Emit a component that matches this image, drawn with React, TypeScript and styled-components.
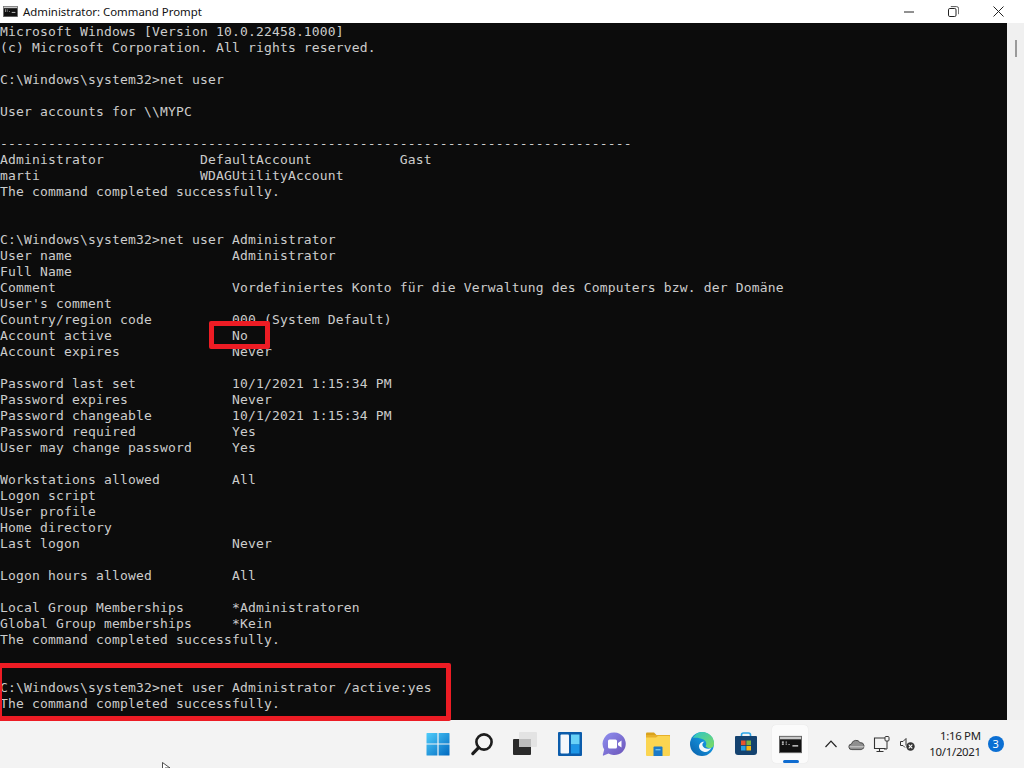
import React from "react";
import styled, { createGlobalStyle } from "styled-components";

const Global = createGlobalStyle`
  html, body { margin: 0; padding: 0; width: 1024px; height: 768px; overflow: hidden; background: #f3f3f3; }
`;

const Page = styled.div`
  position: relative;
  width: 1024px;
  height: 768px;
  display: flex;
  flex-direction: column;
  overflow: hidden;
  font-family: "Noto Sans", "Open Sans", sans-serif;
`;

const TitleBar = styled.header`
  height: 23px;
  flex: none;
  background: #fff;
  display: flex;
  align-items: center;
  padding: 0 3px;
`;

const TitleText = styled.span`
  margin-left: 5px;
  flex: 1;
  font-size: 11.4px;
  color: #111;
  white-space: nowrap;
`;

const WinButton = styled.div`
  width: 45px;
  height: 23px;
  display: flex;
  align-items: center;
  justify-content: center;
`;

const Middle = styled.div`
  flex: 1;
  display: flex;
  min-height: 0;
`;

const Console = styled.pre`
  flex: 1;
  margin: 0;
  padding-top: 1px;
  background: #0c0c0c;
  color: #cccccc;
  font-family: "DejaVu Sans Mono", monospace;
  font-size: 13px;
  letter-spacing: 0.17px;
  line-height: 16px;
  overflow: hidden;
`;

const ScrollTrack = styled.div`
  width: 17px;
  flex: none;
  background: #f0f0f0;
  padding-top: 17px;
  display: flex;
  justify-content: center;
`;

const ScrollThumb = styled.div`
  width: 2px;
  height: 17px;
  background: #9a9a9a;
`;

const Taskbar = styled.footer`
  height: 48px;
  flex: none;
  background: #f3f3f3;
  display: flex;
  align-items: center;
  padding-left: 416px;
`;

const Apps = styled.div`
  display: flex;
  align-items: center;
  height: 48px;
`;

const AppSlot = styled.div<{ $active?: boolean }>`
  position: relative;
  width: 44px;
  height: 48px;
  display: flex;
  align-items: center;
  justify-content: center;
  &::before {
    content: "";
    display: ${(p) => (p.$active ? "block" : "none")};
    position: absolute;
    left: 4px;
    top: 5px;
    width: 36px;
    height: 38px;
    background: #fbfbfb;
    border-radius: 4px;
    box-shadow: 0 0 1px rgba(0, 0, 0, 0.12);
  }
  &::after {
    content: "";
    display: ${(p) => (p.$active ? "block" : "none")};
    position: absolute;
    left: 15px;
    top: 40px;
    width: 16px;
    height: 3px;
    border-radius: 2px;
    background: #0f6cd0;
  }
  & > svg {
    position: relative;
    z-index: 1;
  }
`;

const Tray = styled.div`
  display: flex;
  align-items: center;
  height: 48px;
  margin-left: 6px;
`;

const TrayIcon = styled.div`
  width: 25.7px;
  display: flex;
  justify-content: center;
`;

const Clock = styled.div`
  width: 60px;
  text-align: right;
  font-size: 11.4px;
  letter-spacing: -0.3px;
  line-height: 16px;
  color: #222;
`;

const Badge = styled.div`
  width: 16px;
  height: 16px;
  margin-left: 7px;
  border-radius: 50%;
  background: #0b6fd3;
  color: #fff;
  font-size: 11px;
  line-height: 16px;
  text-align: center;
`;

const RedFrame = styled.div<{ $l: number; $t: number; $w: number; $h: number }>`
  position: absolute;
  left: ${(p) => p.$l}px;
  top: ${(p) => p.$t}px;
  width: ${(p) => p.$w}px;
  height: ${(p) => p.$h}px;
  box-sizing: border-box;
  border: 5px solid #ed1c24;
  border-radius: 2px;
`;

const Cursor = styled.svg`
  position: absolute;
  left: 162px;
  top: 762px;
`;

const log = String.raw`Microsoft Windows [Version 10.0.22458.1000]
(c) Microsoft Corporation. All rights reserved.

C:\Windows\system32>net user

User accounts for \\MYPC

-------------------------------------------------------------------------------
Administrator            DefaultAccount           Gast
marti                    WDAGUtilityAccount
The command completed successfully.


C:\Windows\system32>net user Administrator
User name                    Administrator
Full Name
Comment                      Vordefiniertes Konto für die Verwaltung des Computers bzw. der Domäne
User's comment
Country/region code          000 (System Default)
Account active               No
Account expires              Never

Password last set            10/1/2021 1:15:34 PM
Password expires             Never
Password changeable          10/1/2021 1:15:34 PM
Password required            Yes
User may change password     Yes

Workstations allowed         All
Logon script
User profile
Home directory
Last logon                   Never

Logon hours allowed          All

Local Group Memberships      *Administratoren
Global Group memberships     *Kein
The command completed successfully.


C:\Windows\system32>net user Administrator /active:yes
The command completed successfully.`;

const CmdGlyph = ({ w, h }: { w: number; h: number }) => (
  <svg width={w} height={h} viewBox="0 0 24 18">
    <rect x="0.5" y="0.5" width="23" height="17" fill="#111" stroke="#666" />
    <rect x="1" y="1" width="22" height="2.6" fill="#c8c8c8" />
    <path d="M3 6.5h2M3 8.5h2M7 6.5h1M7 8.5h1M10 9h1M14 10.5h6" stroke="#e8e8e8" strokeWidth="1.3" />
  </svg>
);

const StartIcon = () => (
  <svg width="24" height="24" viewBox="0 0 24 24">
    <defs>
      <linearGradient id="st" x1="0" y1="0" x2="1" y2="1">
        <stop offset="0" stopColor="#4fcdfb" />
        <stop offset="1" stopColor="#0069c0" />
      </linearGradient>
    </defs>
    <path d="M1 1h10.4v10.4H0.5V1.5Q.5 1 1 1ZM12.6 1H23q.5 0 .5.5v9.9H12.6ZM.5 12.6h10.9v10.9H1q-.5 0-.5-.5ZM12.6 12.6h10.9V23q0 .5-.5.5H12.6Z" fill="url(#st)" />
  </svg>
);

const SearchIcon = () => (
  <svg width="24" height="24" viewBox="0 0 24 24">
    <circle cx="14" cy="10" r="7.6" fill="none" stroke="#1c1c1c" strokeWidth="2.6" />
    <path d="M8.6 15.6 2.8 21.6" stroke="#1c1c1c" strokeWidth="3.2" strokeLinecap="round" />
  </svg>
);

const TaskViewIcon = () => (
  <svg width="26" height="24" viewBox="0 0 26 24">
    <rect x="6" y="0" width="18" height="15" rx="1" fill="#e3e3e3" />
    <rect x="0" y="7" width="18" height="16" rx="1" fill="#2a2a2a" />
    <rect x="6" y="7" width="12" height="8" fill="#bdbdbd" />
  </svg>
);

const WidgetsIcon = () => (
  <svg width="24" height="24" viewBox="0 0 24 24">
    <rect width="24" height="24" rx="1" fill="#0b5cab" />
    <rect x="2.5" y="2.5" width="8.5" height="19" rx="1" fill="#f4f7fb" />
    <rect x="13" y="2.5" width="8.5" height="10" fill="#69d2f7" />
    <rect x="13" y="12.5" width="8.5" height="9" fill="#1d96e6" />
  </svg>
);

const ChatIcon = () => (
  <svg width="24" height="24" viewBox="0 0 24 24">
    <defs>
      <linearGradient id="ch" x1="0" y1="0" x2="1" y2="1">
        <stop offset="0" stopColor="#8f8ff0" />
        <stop offset="1" stopColor="#6b54b8" />
      </linearGradient>
    </defs>
    <path d="M12.5 0.5a11.3 11.3 0 1 1-6 20.9L1.6 23.6c-.5.2-.9-.2-.8-.7l1.4-5.4A11.3 11.3 0 0 1 12.5.5Z" fill="url(#ch)" />
    <rect x="6" y="7.5" width="9" height="9" rx="1.5" fill="#fff" />
    <path d="m16 11 3.5-2.4v7L16 13.2Z" fill="#fff" />
  </svg>
);

const ExplorerIcon = () => (
  <svg width="24" height="24" viewBox="0 0 24 24">
    <path d="M0 1.5Q0 .5 1 .5h7l2.5 2.5H0Z" fill="#d9a21c" />
    <rect x="0" y="3" width="24" height="3" fill="#e7b02b" />
    <path d="M0 5.5 10 5.5 12 4H23q1 0 1 1v18q0 1-1 1H1q-1 0-1-1Z" fill="#fbd551" />
    <path d="M7.5 15.5q0-1 1-1h7q1 0 1 1V24h-9Z" fill="#1b7ac8" />
    <rect x="9.5" y="17" width="5" height="1.4" fill="#6fc1ee" />
  </svg>
);

const EdgeIcon = () => (
  <svg width="24" height="24" viewBox="0 0 24 24">
    <defs>
      <linearGradient id="ed" x1="0" y1="1" x2="1" y2="0">
        <stop offset="0" stopColor="#0a5ea8" />
        <stop offset="0.6" stopColor="#1391db" />
        <stop offset="1" stopColor="#2fc6d8" />
      </linearGradient>
      <linearGradient id="eg" x1="0" y1="0" x2="1" y2="1">
        <stop offset="0" stopColor="#2cc4c9" />
        <stop offset="1" stopColor="#7fdc5e" />
      </linearGradient>
    </defs>
    <circle cx="12" cy="12" r="12" fill="url(#ed)" />
    <path d="M3 6C5 2 9 0 12 0c7 0 12 5.5 12 11 0 2-.5 3.5-2 4.5-2 1-5.5.6-6.5-1.2C17 12.5 16.5 9 13.5 7.5 9.5 5.4 5 5.5 3 6Z" fill="url(#eg)" />
    <path d="M9 14.5c0-3 2.5-5.3 5.5-4.8-1.8.7-2.6 2.4-1.8 4.2 1 2.2 4.6 3.6 8.6 2.2-1.5 3-5 4.6-7.5 3.6C11 19 9 17.2 9 14.5Z" fill="#f3f8fc" />
  </svg>
);

const StoreIcon = () => (
  <svg width="24" height="24" viewBox="0 0 24 24">
    <path d="M7.5 4.5V3a2 2 0 0 1 2-2h5a2 2 0 0 1 2 2v1.5" fill="none" stroke="#2aa5e8" strokeWidth="1.6" />
    <path d="M1 5q0-1 1-1h20q1 0 1 1v15q0 3-3 3H4q-3 0-3-3Z" fill="#14426f" />
    <rect x="7" y="8.5" width="4.6" height="4.6" fill="#e8532c" />
    <rect x="12.4" y="8.5" width="4.6" height="4.6" fill="#7db343" />
    <rect x="7" y="13.9" width="4.6" height="4.6" fill="#28a1e6" />
    <rect x="12.4" y="13.9" width="4.6" height="4.6" fill="#f8b712" />
  </svg>
);

const Chevron = () => (
  <svg width="14" height="10" viewBox="0 0 14 10">
    <path d="M1.5 8 7 2.2 12.5 8" fill="none" stroke="#222" strokeWidth="1.2" />
  </svg>
);

const CloudIcon = () => (
  <svg width="17" height="13" viewBox="0 0 18 14">
    <path d="M4 12.5a3 3 0 0 1-.4-6A5 5 0 0 1 12.8 5 3.8 3.8 0 0 1 14 12.5Z" fill="#8f8f8f" stroke="#444" strokeWidth="1" />
    <path d="M1.5 9.5h15.5" stroke="#d8d8d8" strokeWidth="1" />
  </svg>
);

const NetworkIcon = () => (
  <svg width="18" height="17" viewBox="0 0 18 17">
    <path d="M12 2H1.5v10.5h11M6.5 12.5v3M3.5 15.5h7" fill="none" stroke="#333" strokeWidth="1.1" />
    <rect x="12" y="0.5" width="4" height="4.5" rx="1" fill="none" stroke="#333" />
    <path d="M14 5v8H11" fill="none" stroke="#333" />
  </svg>
);

const VolumeIcon = () => (
  <svg width="15" height="14" viewBox="0 0 15 14">
    <path d="M.5 4.5h2.5L6 1.5v7M.5 4.5v4h2.5l2 2" fill="none" stroke="#333" strokeWidth="1" />
    <circle cx="10.5" cy="9.5" r="4.2" fill="#333" />
    <path d="m8.7 7.7 3.6 3.6m0-3.6-3.6 3.6" stroke="#fff" strokeWidth="1.1" />
  </svg>
);

export default function App() {
  return (
    <Page>
      <Global />
      <TitleBar>
        <CmdGlyph w={15} h={11} />
        <TitleText>Administrator: Command Prompt</TitleText>
        <WinButton>
          <svg width="10" height="2" viewBox="0 0 10 2"><path d="M0 1h10" stroke="#222" /></svg>
        </WinButton>
        <WinButton>
          <svg width="11" height="11" viewBox="0 0 11 11"><rect x="0.5" y="2.5" width="7.5" height="8" rx="1.3" fill="none" stroke="#222" /><path d="M2.8.6h5.7q2.2 0 2.2 2.2v5.4" fill="none" stroke="#444" strokeWidth=".9" /></svg>
        </WinButton>
        <WinButton>
          <svg width="11" height="11" viewBox="0 0 11 11"><path d="m.5.5 10 10m0-10-10 10" stroke="#222" /></svg>
        </WinButton>
      </TitleBar>
      <Middle>
        <Console>{log}</Console>
        <ScrollTrack><ScrollThumb /></ScrollTrack>
      </Middle>
      <Taskbar>
        <Apps>
          <AppSlot><StartIcon /></AppSlot>
          <AppSlot><SearchIcon /></AppSlot>
          <AppSlot><TaskViewIcon /></AppSlot>
          <AppSlot><WidgetsIcon /></AppSlot>
          <AppSlot><ChatIcon /></AppSlot>
          <AppSlot><ExplorerIcon /></AppSlot>
          <AppSlot><EdgeIcon /></AppSlot>
          <AppSlot><StoreIcon /></AppSlot>
          <AppSlot $active><CmdGlyph w={23} h={19} /></AppSlot>
        </Apps>
        <Tray>
          <TrayIcon><Chevron /></TrayIcon>
          <TrayIcon><CloudIcon /></TrayIcon>
          <TrayIcon><NetworkIcon /></TrayIcon>
          <TrayIcon><VolumeIcon /></TrayIcon>
          <Clock>1:16 PM<br />10/1/2021</Clock>
          <Badge>3</Badge>
        </Tray>
      </Taskbar>
      <RedFrame $l={209} $t={321} $w={61} $h={28} />
      <RedFrame $l={-3} $t={663} $w={454} $h={58} />
      <Cursor width="9" height="8" viewBox="0 0 9 8">
        <path d="M.5.5v7.5h.5L3 6h5Z" fill="#fff" stroke="#222" strokeWidth=".8" />
      </Cursor>
    </Page>
  );
}
